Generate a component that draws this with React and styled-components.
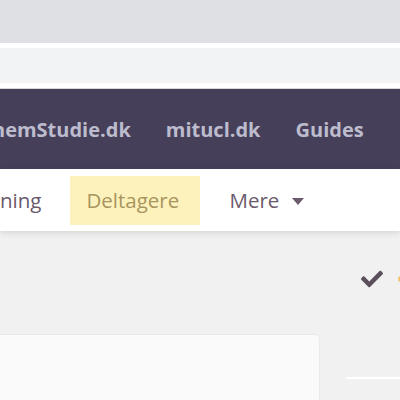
import React from 'react'
import styled, { createGlobalStyle } from 'styled-components'
import { FaCheck } from 'react-icons/fa'

const GlobalStyle = createGlobalStyle`
    html, body {
        margin: 0;
        padding: 0;
        background: #f1f1f1;
        font-family: 'Open Sans', 'Liberation Sans', sans-serif;
        overflow: hidden;
    }
`
const TabStrip = styled.div`
    height: 43px;
    background: #dee0e4;
`
const Chrome = styled.div`
    background: #fff;
    padding: 5px 0;
    border-bottom: 1px solid #d8d8d8;
`
const AddressBar = styled.div`
    height: 35px;
    background: #f2f3f5;
`
const Header = styled.div`
    height: 80px;
    background: #453f5a;
    display: flex;
    align-items: center;
    overflow: hidden;
`
const HeaderLinks = styled.div`
    display: flex;
    gap: 35px;
    margin-left: -8px;
    white-space: nowrap;
`
const HeaderLink = styled.span`
    color: #bdbccd;
    font-size: 20px;
    font-weight: 700;
`
const SubNav = styled.div`
    height: 62px;
    background: #fff;
    display: flex;
    align-items: center;
    box-shadow: 0 2px 6px rgba(0, 0, 0, 0.12);
    position: relative;
    overflow: hidden;
`
const SubLinks = styled.div`
    display: flex;
    align-items: center;
    gap: 13px;
    margin-left: -16px;
    white-space: nowrap;
`
const SubLink = styled.div`
    height: 49px;
    display: flex;
    align-items: center;
    gap: 13px;
    padding: 0 16px;
    font-size: 20.5px;
    color: ${p => (p.active ? '#a8955f' : '#6a5a6c')};
    background: ${p => (p.active ? '#fdf2bb' : 'transparent')};
    width: ${p => (p.width ? `${p.width}px` : 'auto')};
    box-sizing: border-box;
`
const Caret = styled.span`
    width: 0;
    height: 0;
    border-left: 6px solid transparent;
    border-right: 6px solid transparent;
    border-top: 7px solid #6a5a6c;
    margin-top: 2px;
`
const Main = styled.div`
    display: flex;
    gap: 26px;
`
const Card = styled.div`
    flex-shrink: 0;
    width: 326px;
    height: 120px;
    margin-top: 103px;
    margin-left: -6px;
    background: #fafafa;
    border: 1px solid #e9e9e9;
    border-radius: 5px;
    box-sizing: border-box;
`
const Side = styled.div`
    flex: 1;
    min-width: 0;
    display: flex;
    flex-direction: column;
`
const Actions = styled.div`
    display: flex;
    align-items: center;
    gap: 15px;
    margin-top: 38px;
    padding-left: 15px;
    height: 20px;
    color: #5b4f5c;
`
const Dot = styled.span`
    flex-shrink: 0;
    width: 6px;
    height: 6px;
    border-radius: 50%;
    background: #f3c36a;
`
const Rule = styled.div`
    margin-top: 88px;
    height: 2px;
    background: #fff;
`

const App = () => (
    <>
        <GlobalStyle />
        <TabStrip />
        <Chrome>
            <AddressBar />
        </Chrome>
        <Header>
            <HeaderLinks>
                <HeaderLink>nemStudie.dk</HeaderLink>
                <HeaderLink>mitucl.dk</HeaderLink>
                <HeaderLink>Guides</HeaderLink>
            </HeaderLinks>
        </Header>
        <SubNav>
            <SubLinks>
                <SubLink>ning</SubLink>
                <SubLink active width={130}>
                    Deltagere
                </SubLink>
                <SubLink>
                    Mere <Caret />
                </SubLink>
            </SubLinks>
        </SubNav>
        <Main>
            <Card />
            <Side>
                <Actions>
                    <FaCheck size={22} style={{ flexShrink: 0 }} />
                    <Dot />
                </Actions>
                <Rule />
            </Side>
        </Main>
    </>
)

export default App
